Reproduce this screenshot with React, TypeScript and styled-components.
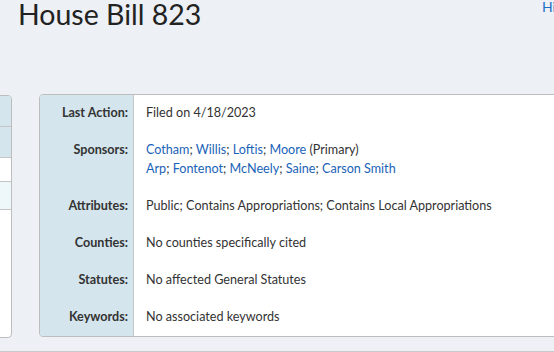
import React from 'react';
import styled, { createGlobalStyle } from 'styled-components';

const GlobalStyle = createGlobalStyle`
  html, body {
    margin: 0;
    padding: 0;
    background: #edf0f5;
    font-family: Lato, "Open Sans", sans-serif;
    color: #333;
  }
  body {
    width: 554px;
    height: 352px;
    overflow: hidden;
  }
`;

const Page = styled.div`
  width: 554px;
  height: 352px;
  overflow: hidden;
  display: flex;
  flex-direction: column;
`;

const Header = styled.div`
  display: flex;
  justify-content: space-between;
  align-items: flex-start;
  flex-shrink: 0;
  height: 94px;
  padding-left: 18px;
`;

const Title = styled.h1`
  margin: -3px 0 0;
  font-size: 28.5px;
  font-weight: 400;
  line-height: 1.2;
  color: #222;
`;

const TopLink = styled.a`
  flex-shrink: 0;
  width: 50px;
  margin-right: -38px;
  font-size: 14px;
  line-height: 14px;
  color: #1f6fc5;
  text-decoration: none;
  white-space: nowrap;
`;

const Content = styled.div`
  display: flex;
  gap: 27px;
  align-items: flex-start;
  flex-shrink: 0;
`;

const SidePanel = styled.div`
  width: 200px;
  margin-left: -190px;
  margin-top: 1px;
  flex-shrink: 0;
  height: 241px;
  border: 1px solid #bdbdbd;
  border-radius: 4px;
  background: #fff;
  overflow: hidden;
`;

const SideRow = styled.div<{ $bg: string; $h: number }>`
  height: ${p => p.$h}px;
  background: ${p => p.$bg};
  border-bottom: 1px solid #c4c4c4;
`;

const MainPanel = styled.div`
  flex: 1;
  margin-right: -20px;
  border: 1px solid #bdbdbd;
  border-radius: 4px;
  overflow: hidden;
  background: #fff;
`;

const Table = styled.table`
  border-collapse: collapse;
  width: 100%;
  font-size: 12.6px;
  line-height: 19px;
`;

const Label = styled.th`
  width: 88px;
  background: #d4e5ed;
  border-right: 1px solid #c4c4c4;
  text-align: right;
  vertical-align: top;
  font-weight: 700;
  padding: 8px 5px 10px 0;
  color: #333;
  white-space: nowrap;
`;

const Value = styled.td`
  padding: 8px 10px 10px 12px;
  vertical-align: top;
  color: #333;
`;

const Link = styled.a`
  color: #1a63b8;
  text-decoration: none;
`;

const Footer = styled.div`
  flex-shrink: 0;
  margin-top: 13px;
  border-top: 1px solid #c8c8c8;
  height: 10px;
`;

const primary = ['Cotham', 'Willis', 'Loftis', 'Moore'];
const cosponsors = ['Arp', 'Fontenot', 'McNeely', 'Saine', 'Carson Smith'];

const names = (list: string[]) =>
  list.map((n, i) => (
    <React.Fragment key={n}>
      <Link href="#">{n}</Link>
      {i < list.length - 1 ? '; ' : ''}
    </React.Fragment>
  ));

export default function App() {
  return (
    <Page>
      <GlobalStyle />
      <Header>
        <Title>House Bill 823</Title>
        <TopLink href="#">History</TopLink>
      </Header>
      <Content>
        <SidePanel>
          <SideRow $bg="#d4e5ed" $h={30} />
          <SideRow $bg="#d4e5ed" $h={30} />
          <SideRow $bg="#fff" $h={23} />
          <SideRow $bg="#eef8fb" $h={27} />
        </SidePanel>
        <MainPanel>
          <Table>
            <tbody>
              <tr>
                <Label>Last Action:</Label>
                <Value>Filed on 4/18/2023</Value>
              </tr>
              <tr>
                <Label>Sponsors:</Label>
                <Value>
                  {names(primary)} (Primary)
                  <br />
                  {names(cosponsors)}
                </Value>
              </tr>
              <tr>
                <Label>Attributes:</Label>
                <Value>Public; Contains Appropriations; Contains Local Appropriations</Value>
              </tr>
              <tr>
                <Label>Counties:</Label>
                <Value>No counties specifically cited</Value>
              </tr>
              <tr>
                <Label>Statutes:</Label>
                <Value>No affected General Statutes</Value>
              </tr>
              <tr>
                <Label>Keywords:</Label>
                <Value>No associated keywords</Value>
              </tr>
            </tbody>
          </Table>
        </MainPanel>
      </Content>
      <Footer />
    </Page>
  );
}
